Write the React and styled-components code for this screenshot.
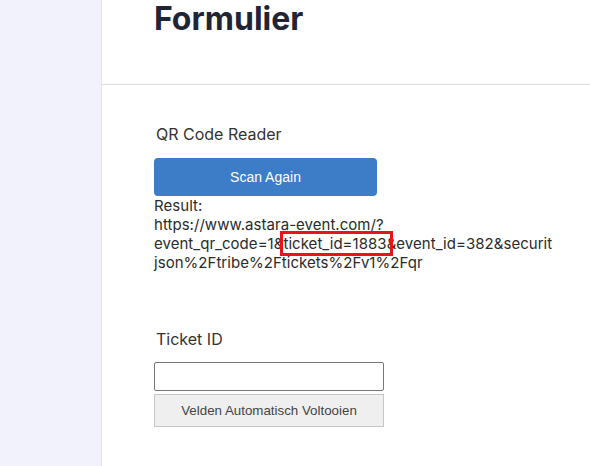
import styled, { createGlobalStyle } from 'styled-components';

const GlobalStyle = createGlobalStyle`
  html, body {
    margin: 0;
    padding: 0;
    background: #ffffff;
  }
  body {
    font-family: Inter, "Liberation Sans", sans-serif;
  }
`;

const Page = styled.div`
  display: flex;
  height: 466px;
  overflow: hidden;
`;

const Sidebar = styled.aside`
  width: 101px;
  flex-shrink: 0;
  background: #f1f2fc;
  border-right: 1px solid #e3e4f1;
`;

const Main = styled.main`
  flex: 1;
  display: flex;
  flex-direction: column;
  min-width: 0;
`;

const Header = styled.header`
  height: 84px;
  padding-left: 52px;
  border-bottom: 1px solid #dcdcdc;
  box-sizing: content-box;
`;

const Title = styled.h1`
  margin: 0;
  font-size: 32px;
  line-height: 38px;
  font-weight: 700;
  color: #1f2535;
`;

const Content = styled.section`
  padding: 37px 0 0 52px;
  display: flex;
  flex-direction: column;
  align-items: flex-start;
`;

const FieldLabel = styled.h2`
  margin: 0 0 ${({ $gap }) => $gap}px 2px;
  font-size: 16px;
  line-height: 24px;
  font-weight: 400;
  color: #333333;
`;

const ScanButton = styled.button`
  width: 223px;
  height: 38px;
  border: none;
  border-radius: 4px;
  background: #3d7cc6;
  color: #ffffff;
  font-family: "Liberation Sans", Arial, sans-serif;
  font-size: 14px;
  cursor: pointer;
`;

const Result = styled.div`
  font-size: 15px;
  line-height: 19px;
  letter-spacing: 0.04px;
  color: #2b2b2b;
  white-space: nowrap;
`;

// rode markering rond het ticket id, over de tekst heen getekend
const Highlight = styled.span`
  outline: 3px solid #e8141b;
  padding-right: 3px;
  margin-right: -3px;
`;

const TicketBlock = styled.div`
  margin-top: 55px;
  display: flex;
  flex-direction: column;
  align-items: flex-start;
`;

const TextInput = styled.input`
  width: 230px;
  height: 29px;
  box-sizing: border-box;
  border: 1px solid #767676;
  border-radius: 2px;
  padding: 0 4px;
  font-size: 14px;
`;

const FillButton = styled.button`
  margin-top: 3px;
  width: 230px;
  height: 33px;
  box-sizing: border-box;
  border: 1px solid #c6c6c6;
  border-radius: 0;
  background: #efefef;
  color: #444444;
  font-family: "Liberation Sans", Arial, sans-serif;
  font-size: 13.333px;
  cursor: pointer;
`;

export default function App() {
  return (
    <>
      <GlobalStyle />
      <Page>
        <Sidebar />
        <Main>
          <Header>
            <Title>Formulier</Title>
          </Header>
          <Content>
            <FieldLabel $gap={12}>QR Code Reader</FieldLabel>
            <ScanButton type="button">Scan Again</ScanButton>
            <Result>
              Result:
              <br />
              https://www.astara-event.com/?
              <br />
              event_qr_code=1&amp;<Highlight>ticket_id=1883</Highlight>&amp;event_id=382&amp;securit
              <br />
              json%2Ftribe%2Ftickets%2Fv1%2Fqr
            </Result>
            <TicketBlock>
              <FieldLabel $gap={11}>Ticket ID</FieldLabel>
              <TextInput type="text" />
              <FillButton type="button">Velden Automatisch Voltooien</FillButton>
            </TicketBlock>
          </Content>
        </Main>
      </Page>
    </>
  );
}
